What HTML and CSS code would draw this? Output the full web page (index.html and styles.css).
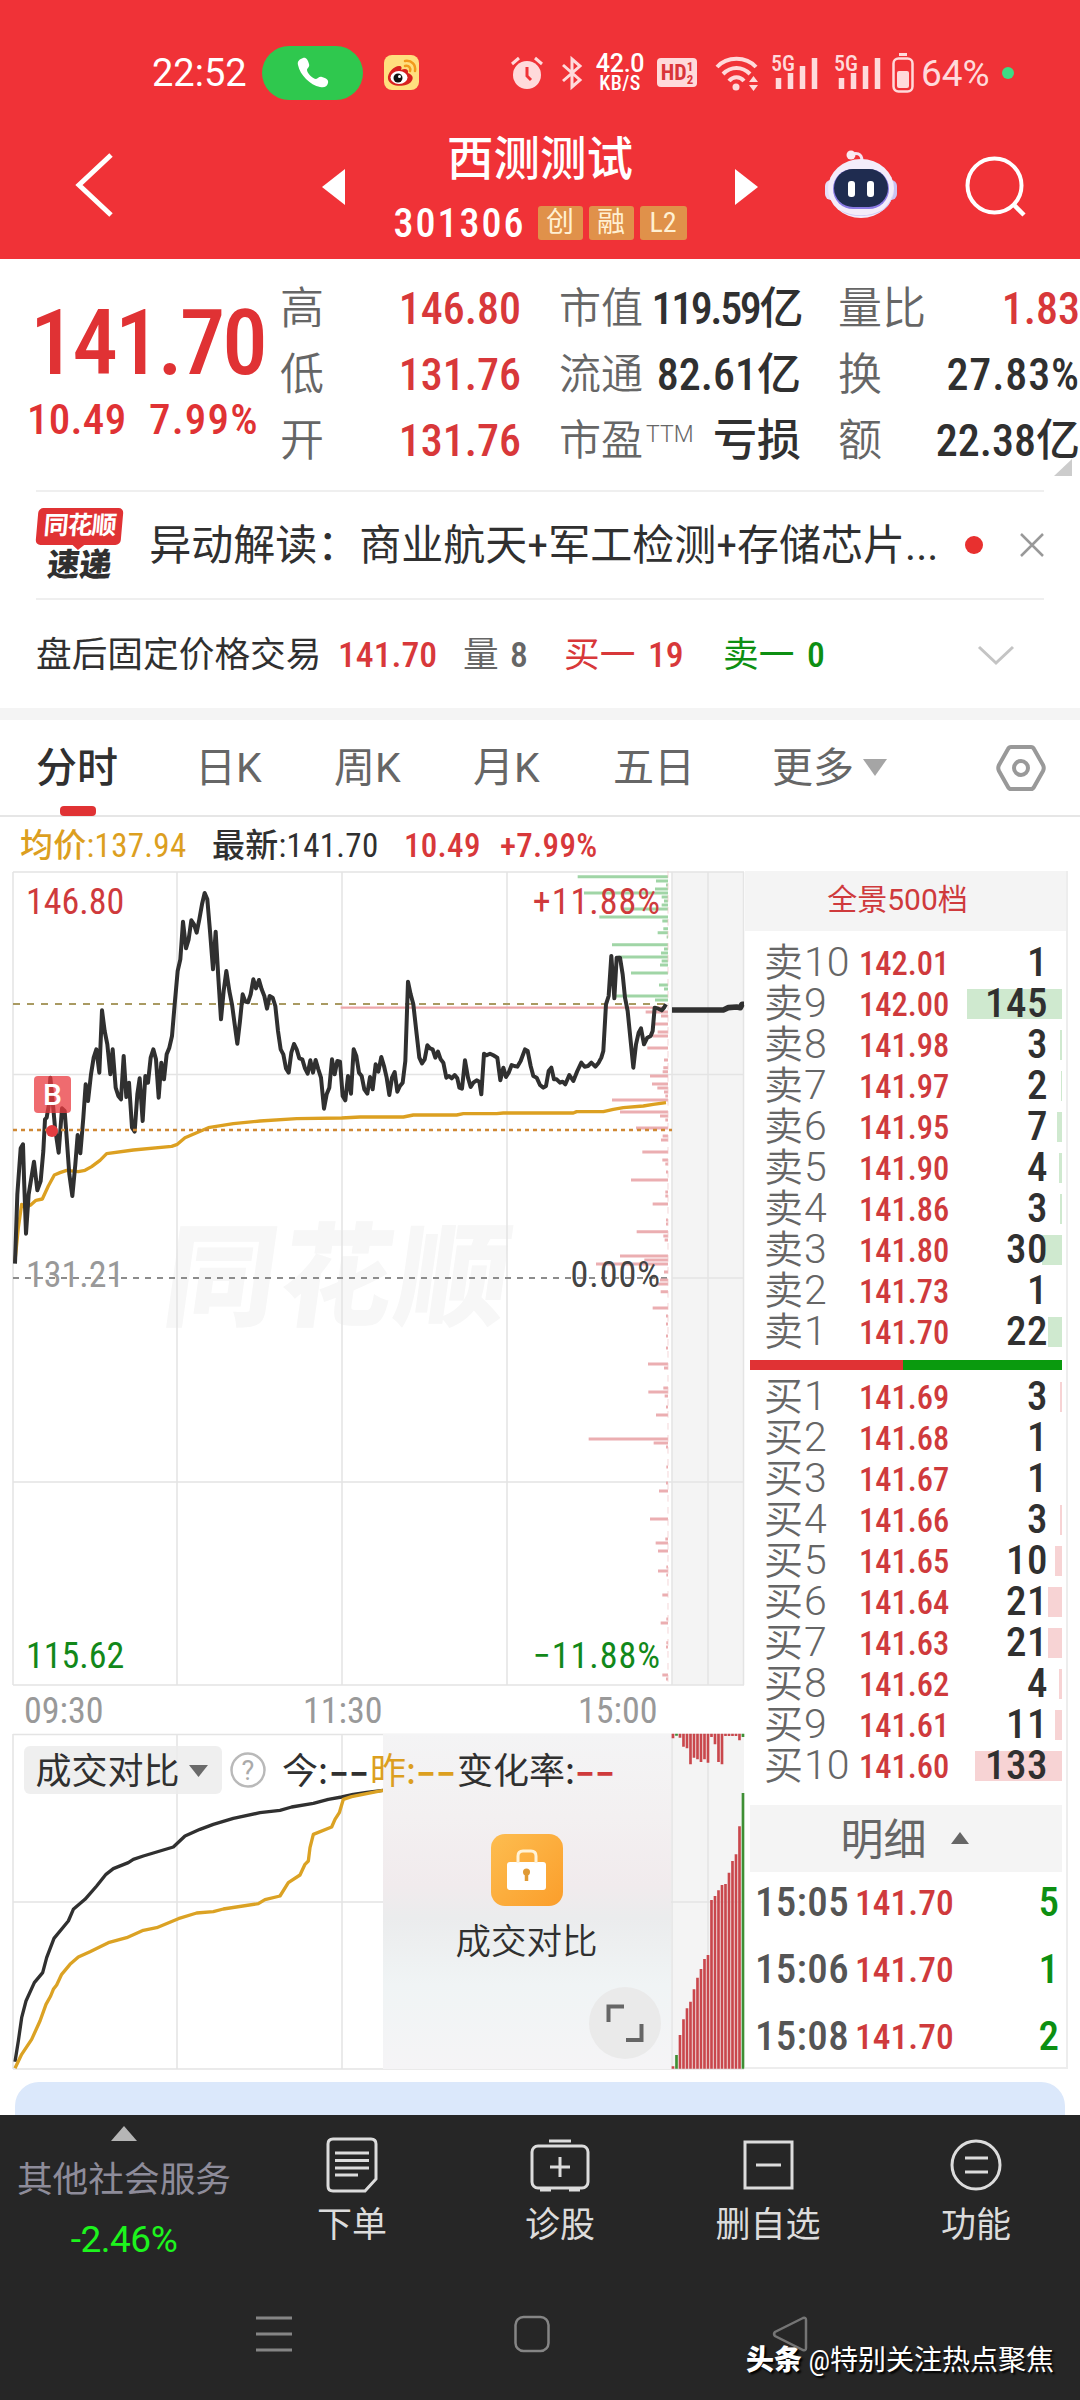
FILE: index.html
```html
<!DOCTYPE html>
<html lang="zh-CN">
<head>
  <meta charset="UTF-8">
  <meta name="viewport" content="width=device-width, initial-scale=1.0">
  <title>西测测试 301306</title>
  <link rel="stylesheet" href="styles.css">
</head>
<body>
  <header class="top">
    <div class="status">
      <span class="clock">22:52</span>
      <span class="call">
        <svg width="34" height="34" viewBox="0 0 34 34"><path d="M7 2c3-1 5 2 6 6 1 3-2 4-2 6 0 3 6 9 9 9 2 0 3-3 6-2 4 1 7 3 6 6-1 4-4 5-8 4C14 29 4 19 2 9c-1-4 2-6 5-7z" fill="#fff"/></svg>
      </span>
      <svg class="weibo" width="35" height="35" viewBox="0 0 35 35">
        <rect width="35" height="35" rx="8" fill="#ffdf7e"/>
        <path d="M4 24c-1-6 6-13 11-13 3 0 3 2 2 4 4-2 8-1 7 3 5 2 6 5 3 9-4 5-21 6-23-3z" fill="#d8201f"/>
        <ellipse cx="15" cy="22.500" rx="8.500" ry="6.500" fill="#fff"/>
        <circle cx="14" cy="23" r="4.500" fill="#111"/><circle cx="15.500" cy="21.500" r="1.500" fill="#fff"/>
        <path d="M21 11c4-1 6 2 5 5M21 6c7-1 11 4 10 10" fill="none" stroke="#f29a1c" stroke-width="2.500" stroke-linecap="round"/>
      </svg>
      <svg class="alarm" width="34" height="34" viewBox="0 0 34 34">
        <circle cx="17" cy="19" r="14" fill="#ffdadb"/>
        <path d="M2 8l7-6M32 8l-7-6" stroke="#ffdadb" stroke-width="3"/>
        <path d="M17 11v9l4 4" fill="none" stroke="#f03237" stroke-width="3"/>
      </svg>
      <svg class="bt" width="22" height="34" viewBox="0 0 22 34"><path d="M2 9l17 15-8 7V3l8 7L2 25" fill="none" stroke="#ffdadb" stroke-width="3"/></svg>
      <span class="speed">42.0<small>KB/S</small></span>
      <span class="hd">HD<small><i>1</i><i>2</i></small></span>
      <svg class="wifi" width="44" height="36" viewBox="0 0 44 36">
        <path d="M2 12C12 1 31 1 41 12M8 19c8-8 19-8 27 0M14 26c4-5 11-5 15 0" fill="none" stroke="#ffdadb" stroke-width="4"/>
        <circle cx="21" cy="32" r="3.500" fill="#ffdadb"/>
        <path d="M34 27h9l-4.500-6zM34 30h9l-4.500 6z" fill="#ffdadb"/>
      </svg>
      <svg class="signal" width="48" height="36" viewBox="0 0 48 36">
        <text x="0" y="16" class="g5">5G</text>
        <path d="M7.500 23v11M19.500 18v16M31.500 11v23M43.500 3v31" stroke="#ffdadb" stroke-width="5.500"/>
      </svg>
      <svg class="signal s2" width="48" height="36" viewBox="0 0 48 36">
        <text x="0" y="16" class="g5">5G</text>
        <path d="M7.500 23v11M19.500 18v16M31.500 11v23M43.500 3v31" stroke="#ffdadb" stroke-width="5.500"/>
      </svg>
      <svg class="battery" width="22" height="40" viewBox="0 0 22 40">
        <path d="M7 1.500h8" stroke="#ffdadb" stroke-width="3"/>
        <rect x="1.500" y="5.500" width="19" height="33" rx="5" fill="none" stroke="#ffdadb" stroke-width="2.500"/>
        <rect x="5" y="18" width="12" height="17" rx="2" fill="#ffdadb"/>
      </svg>
      <span class="pct">64%</span>
      <i class="mic"></i>
    </div>
    <div class="nav">
      <svg class="back" width="40" height="66" viewBox="0 0 40 66"><path d="M36 3L4 33l32 30" fill="none" stroke="#fff" stroke-width="5"/></svg>
      <svg class="prev" width="23" height="36" viewBox="0 0 23 36"><path d="M23 0v36L0 18z" fill="#fff"/></svg>
      <div class="stock">
        <h1>西测测试</h1>
        <div class="code">301306 <b>创</b><b>融</b><b class="l2">L2</b></div>
      </div>
      <svg class="next" width="23" height="36" viewBox="0 0 23 36"><path d="M0 0v36l23-18z" fill="#fff"/></svg>
      <svg class="robot" width="74" height="70" viewBox="0 0 74 70">
        <path d="M26 6c6-3 12-2 12 6" fill="none" stroke="#f6e4f2" stroke-width="3"/>
        <circle cx="27" cy="6" r="4.500" fill="#fbeaf2"/>
        <rect x="1" y="31" width="12" height="20" rx="6" fill="#e6def8"/><rect x="61" y="31" width="12" height="20" rx="6" fill="#c9c3f3"/>
        <ellipse cx="37" cy="39.500" rx="33" ry="29.500" fill="#f3ecfa"/>
        <path d="M16 61c12 7 30 7 42 0 7-5 11-13 11-20 0 18-14 26-32 26-9 0-16-2-21-6z" fill="#cfc9f4"/>
        <rect x="9" y="20" width="56" height="40" rx="20" fill="#8a7ae4"/>
        <rect x="10" y="20" width="54" height="38" rx="19" fill="#1f2c50"/>
        <rect x="24" y="32" width="7" height="16" rx="3" fill="#fff"/><rect x="43" y="32" width="7" height="16" rx="3" fill="#fff"/>
      </svg>
      <svg class="search" width="62" height="62" viewBox="0 0 62 62"><circle cx="29.500" cy="29.500" r="27" fill="none" stroke="#fff" stroke-width="4"/><path d="M48 48l11 11" stroke="#fff" stroke-width="4.500"/></svg>
    </div>
  </header>

  <section class="quote">
    <div class="last">
      <div class="price">141.70</div>
      <div class="diff"><span>10.49</span><span>7.99%</span></div>
    </div>
    <div class="grid">
      <span>高</span><b class="up">146.80</b><span class="k2">市值</span><b class="tight">119.59亿</b><span class="k3">量比</span><b class="up">1.83</b>
      <span>低</span><b class="up">131.76</b><span class="k2">流通</span><b>82.61亿</b><span class="k3">换</span><b class="wide">27.83%</b>
      <span>开</span><b class="up">131.76</b><span class="k2">市盈<sup>TTM</sup></span><b>亏损</b><span class="k3">额</span><b>22.38亿</b>
    </div>
    <i class="corner"></i>
  </section>

  <section class="news">
    <div class="logo"><em>同花顺</em><strong>速递</strong></div>
    <p>异动解读：商业航天+军工检测+存储芯片...</p>
    <i class="dot"></i>
    <svg width="24" height="24" viewBox="0 0 24 24"><path d="M1 1l22 22M23 1L1 23" stroke="#999" stroke-width="2.500"/></svg>
  </section>

  <section class="fixed">
    <span>盘后固定价格交易</span><b class="up">141.70</b><span class="grey vol">量</span><b class="grey">8</b><span class="up">买一</span><b class="up">19</b><span class="down">卖一</span><b class="down">0</b>
    <svg width="36" height="20" viewBox="0 0 36 20"><path d="M1 2l17 16L35 2" fill="none" stroke="#c4c4c4" stroke-width="3"/></svg>
  </section>

  <nav class="tabs">
    <a class="on">分时</a><a>日K</a><a>周K</a><a>月K</a><a>五日</a><a class="more">更多<i></i></a>
    <svg width="50" height="48" viewBox="0 0 50 48"><path d="M15 3h20q2 0 3 2l9 16q1.500 3 0 6l-9 16q-1 2-3 2H15q-2 0-3-2L3 27q-1.500-3 0-6l9-16q1-2 3-2z" fill="none" stroke="#999" stroke-width="4"/><circle cx="25" cy="24" r="7" fill="none" stroke="#999" stroke-width="4"/></svg>
  </nav>

  <div class="info">
    <span class="avg">均价:137.94</span><span>最新:141.70</span><span class="up">10.49</span><span class="up">+7.99%</span>
  </div>

  <main class="board">
    <svg class="chart" width="745" height="1202" viewBox="0 869 745 1202">
      <defs>
        <linearGradient id="gold" x1="0" y1="0" x2="1" y2="1"><stop offset="0" stop-color="#fdbd50"/><stop offset="1" stop-color="#fb9e2b"/></linearGradient>
        <linearGradient id="haze" x1="0" y1="0" x2="0" y2="1">
          <stop offset="0" stop-color="#f4f4f5"/><stop offset=".25" stop-color="#f3f0f1"/><stop offset=".45" stop-color="#f1ebed"/>
          <stop offset=".55" stop-color="#ebeced"/><stop offset=".75" stop-color="#f0f4f5"/><stop offset="1" stop-color="#f5f4f6"/>
        </linearGradient>
      </defs>
      <rect x="672" y="871" width="72" height="813" fill="#f4f4f4"/>
      <text class="mark" transform="translate(160 1316) skewX(-8)">同花顺</text>
      <path class="gl" d="M13 871H744M13 1073.500H744M13 1481H744M13 1684H744M13 871V1684M177 871V1684M342 871V1684M507 871V1684M672 871V1684M708 871V1684M743.500 871V1684M672 1277H744"/>
      <path d="M13 1277H668" stroke="#8c8c8c" stroke-width="2" stroke-dasharray="6 6"/>
      <path d="M13 1003H668" stroke="#a99a62" stroke-width="2" stroke-dasharray="7 7"/>
      <g transform="translate(0 860) scale(.33333)" fill="none" stroke-linejoin="round">
        <path id="asks" stroke="#a0d5a6" stroke-width="9"/>
        <path id="bids" stroke="#ebaeb1" stroke-width="9"/>
        <path d="M1022 440H1990" stroke="#eda6aa" stroke-width="7"/>
        <path d="M2004 30V2465" stroke="#f0c3c5" stroke-width="2" stroke-dasharray="20 16"/>
        <polyline stroke="#dca021" stroke-width="10" points="45,1200 55,1100 65,1030 75,1040 92,1032 108,1018 127,1014 145,975 163,942 180,935 200,928 235,932 255,928 275,917 300,898 320,878 400,867 515,856 532,850 555,830 590,815 625,800 700,788 780,780 890,773 1025,771 1080,768 1210,768 1240,762 1370,762 1390,758 1490,758 1510,756 1720,756 1730,752 1810,752 1840,745 1870,740 1930,735 1960,730 1998,725"/>
        <polyline stroke="#303030" stroke-width="12" points="45,1208 52,1000 62,862 69,850 72,950 78,1118 86,1000 102,902 112,988 122,960 130,870 135,775 140,770 146,735 151,650 158,720 165,800 176,875 186,742 194,750 200,830 208,940 217,1005 226,910 233,822 241,877 250,770 257,670 264,720 273,640 281,590 289,565 298,635 306,448 314,510 322,550 331,640 338,565 347,680 355,705 363,715 371,585 379,708 387,665 396,800 404,812 412,700 419,652 428,780 436,645 444,665 452,590 460,565 468,595 476,710 484,605 492,655 500,580 508,560 516,525 524,430 533,330 541,295 549,182 558,262 566,235 574,178 582,190 590,215 598,175 606,130 614,96 622,115 630,210 639,325 647,212 655,350 663,475 671,390 679,330 688,390 696,430 704,490 712,548 720,480 728,400 736,422 744,424 752,400 760,355 768,382 777,357 785,385 793,405 801,443 809,405 818,410 826,435 834,510 842,565 850,580 858,622 866,635 874,575 882,549 890,565 898,592 907,595 915,622 923,638 931,598 939,635 947,597 955,625 963,650 972,743 980,700 988,680 996,595 1004,640 1012,600 1020,602 1028,705 1036,718 1044,645 1053,698 1061,565 1069,585 1077,635 1085,645 1093,685 1102,698 1110,648 1118,685 1127,610 1135,632 1144,588 1152,615 1160,650 1168,702 1176,650 1184,633 1192,692 1200,675 1208,665 1216,600 1224,362 1232,400 1240,430 1250,520 1258,590 1266,607 1274,595 1282,553 1290,562 1298,565 1306,590 1314,572 1322,595 1330,605 1339,650 1347,645 1355,652 1364,642 1372,652 1378,680 1386,683 1395,598 1404,650 1412,678 1420,665 1430,658 1438,662 1444,700 1452,578 1460,583 1470,578 1480,583 1492,590 1501,658 1510,620 1518,648 1526,635 1535,612 1543,615 1552,617 1562,600 1575,565 1583,570 1592,615 1600,645 1610,650 1620,672 1630,680 1638,675 1646,630 1654,620 1662,655 1670,655 1680,665 1688,662 1696,670 1708,642 1720,660 1732,630 1744,605 1754,617 1764,615 1774,605 1786,617 1796,605 1804,590 1810,570 1818,430 1826,405 1834,285 1843,412 1850,290 1860,290 1868,340 1875,410 1883,450 1892,540 1900,620 1908,550 1916,515 1923,502 1932,550 1942,530 1952,525 1958,510 1964,440 1975,443 1985,448 1992,440 1998,430"/>
        <polyline stroke="#303030" stroke-width="17" points="2016,447 2170,447 2185,440 2210,438 2221,440 2226,430 2232,430"/>
      </g>
      <path d="M13 1129H672" stroke="#cf8834" stroke-width="2.500" stroke-dasharray="4 4"/>
      <circle cx="52" cy="1130" r="6" fill="#e43c40"/>
      <rect x="34" y="1075" width="37" height="37" rx="4" fill="#e93a3f" opacity=".75"/>
      <text x="52.500" y="1104" class="buy">B</text>
      <g class="lab">
        <text x="26" y="913" fill="#cf3a3c">146.80</text>
        <text x="661" y="913" class="rt" fill="#cf3a3c">+11.88%</text>
        <text x="26" y="1286" fill="#999">131.21</text>
        <text x="661" y="1286" class="rt" fill="#444">0.00%</text>
        <text x="26" y="1667" fill="#12881a">115.62</text>
        <text x="661" y="1667" class="rt" fill="#12881a">−11.88%</text>
        <g fill="#999"><text x="24" y="1722">09:30</text><text x="303" y="1722">11:30</text><text x="578" y="1722">15:00</text></g>
      </g>

      <rect x="672" y="1733" width="72" height="335" fill="#f4f4f4"/>
      <path class="gl" d="M13 1733.500H744M13 1901H744M13 2068H744M13 1733V2068M177 1733V2068M342 1733V2068M708 1733V2068M672 1733V2068"/>
      <g transform="translate(0 1680) scale(.33333)" fill="none" stroke-linejoin="round">
        <polyline stroke="#303030" stroke-width="10" points="45,1142 55,1080 65,1010 78,960 103,905 128,875 140,830 162,772 205,720 220,685 255,655 290,615 318,580 340,563 385,545 400,535 430,525 480,510 520,498 555,465 600,445 640,430 700,412 780,395 840,388 875,378 940,367 985,355 1025,348 1060,340 1100,334 1149,328"/>
        <polyline stroke="#dba224" stroke-width="10" points="45,1162 65,1120 95,1075 120,1020 138,970 152,945 160,925 170,912 185,880 210,850 235,828 270,812 325,785 380,770 430,748 470,740 535,713 590,696 640,692 670,684 775,668 795,656 840,645 865,605 900,582 915,550 925,540 930,500 940,460 995,438 1005,415 1018,395 1030,355 1055,347 1149,328"/>
        <path id="volUp" stroke="#c9474c" stroke-width="8"/>
        <path id="volDown" stroke="#3f8f35" stroke-width="8"/>
      </g>
      <rect x="383" y="1733" width="288" height="335" fill="url(#haze)"/>
      <rect x="24" y="1745" width="198" height="48" rx="6" fill="#ececec" opacity=".85"/>
      <path d="M189 1764h19l-9.500 12z" fill="#6a6a6a"/>
      <circle cx="248" cy="1769" r="16.500" fill="none" stroke="#b9b9b9" stroke-width="2.500"/>
      <text x="248" y="1779" class="q">?</text>
      <g class="cmp">
        <text x="35.500" y="1783">成交对比</text>
        <text x="282" y="1783">今:</text><text x="329" y="1783" class="dash" textLength="40" lengthAdjust="spacingAndGlyphs">--</text>
        <g fill="#dc9f1f"><text x="370" y="1783">昨:</text><text x="416" y="1783" class="dash" textLength="40" lengthAdjust="spacingAndGlyphs">--</text></g>
        <text x="457" y="1783">变化率:</text><text x="575" y="1783" class="dash" textLength="40" lengthAdjust="spacingAndGlyphs" fill="#cf3a3c">--</text>
        <text x="526.500" y="1953" text-anchor="middle" class="thin">成交对比</text>
      </g>
      <rect x="491" y="1833" width="72" height="72" rx="14" fill="url(#gold)"/>
      <rect x="507" y="1861" width="39" height="28" rx="3" fill="#fff"/>
      <path d="M518 1862v-7q0-5 5-5h8q5 0 5 5v7" fill="none" stroke="#fff3d8" stroke-width="3"/>
      <circle cx="526.500" cy="1871" r="3.500" fill="#e09a35"/><path d="M526.500 1871v9" stroke="#e09a35" stroke-width="3.500"/>
      <circle cx="625" cy="2022" r="36" fill="#eaeaea"/>
      <path d="M608.500 2021v-15.500H624M641.500 2023v16H626" fill="none" stroke="#666" stroke-width="4"/>
    </svg>

    <aside class="book">
      <div class="full">全景500档</div>
      <div id="sell" class="rows"></div>
      <div class="ratio"><i></i></div>
      <div id="buy" class="rows bid"></div>
      <div class="detail">明细<i></i></div>
      <div class="deal"><span>15:05</span><b>141.70</b><em>5</em></div>
      <div class="deal"><span>15:06</span><b>141.70</b><em>1</em></div>
      <div class="deal"><span>15:08</span><b>141.70</b><em>2</em></div>
    </aside>
  </main>

  <div class="card"></div>

  <footer class="bottom">
    <div class="menu">
      <div class="sector"><i></i><span>其他社会服务</span><b>-2.46%</b></div>
      <div class="item">
        <svg width="52" height="56" viewBox="0 0 52 56"><path d="M7 2h38q5 0 5 5v35L39 54H7q-5 0-5-5V7q0-5 5-5z" fill="none" stroke="#dcdcdc" stroke-width="3"/><path d="M9 16h34M9 23.500h34M9 31h34M9 38h23" stroke="#dcdcdc" stroke-width="3"/></svg>
        <span>下单</span>
      </div>
      <div class="item">
        <svg width="60" height="56" viewBox="0 0 60 56"><path d="M19 4h22" stroke="#dcdcdc" stroke-width="3"/><rect x="2" y="9" width="56" height="42" rx="6" fill="none" stroke="#dcdcdc" stroke-width="3"/><path d="M20 30h20M30 20v20M10 53h11M39 53h11" stroke="#dcdcdc" stroke-width="3"/></svg>
        <span>诊股</span>
      </div>
      <div class="item">
        <svg width="52" height="56" viewBox="0 0 52 56"><rect x="3" y="5" width="47" height="46" fill="none" stroke="#dcdcdc" stroke-width="3"/><path d="M14 28h25" stroke="#dcdcdc" stroke-width="3"/></svg>
        <span>删自选</span>
      </div>
      <div class="item">
        <svg width="52" height="56" viewBox="0 0 52 56"><circle cx="26" cy="28" r="24" fill="none" stroke="#dcdcdc" stroke-width="3"/><path d="M15 21h23M15 35h23" stroke="#dcdcdc" stroke-width="3"/></svg>
        <span>功能</span>
      </div>
    </div>
    <div class="sys">
      <svg width="36" height="38" viewBox="0 0 36 38"><path d="M0 3h36M0 19h36M0 35h36" stroke="#858585" stroke-width="3"/></svg>
      <svg width="36" height="38" viewBox="0 0 36 38"><rect x="1.500" y="2" width="33" height="34" rx="8" fill="none" stroke="#858585" stroke-width="2.500"/></svg>
      <svg width="36" height="38" viewBox="0 0 36 38"><path d="M31 3L3 17q-2 2 0 4l28 14q3 1 3-2V5q0-3-3-2z" fill="none" stroke="#757575" stroke-width="2.500"/></svg>
    </div>
    <div class="author"><b>头条</b> @特别关注热点聚焦</div>
  </footer>

  <script>
    const sell = [[10, '142.01', 1], [9, '142.00', 145], [8, '141.98', 3], [7, '141.97', 2], [6, '141.95', 7],
                  [5, '141.90', 4], [4, '141.86', 3], [3, '141.80', 30], [2, '141.73', 1], [1, '141.70', 22]];
    const buy = [[1, '141.69', 3], [2, '141.68', 1], [3, '141.67', 1], [4, '141.66', 3], [5, '141.65', 10],
                 [6, '141.64', 21], [7, '141.63', 21], [8, '141.62', 4], [9, '141.61', 11], [10, '141.60', 133]];

    function fill(id, name, list) {
      document.getElementById(id).innerHTML = list.map(([n, price, qty]) => {
        const w = qty < 2 ? 0 : Math.max(1, Math.round(qty * 0.655));
        return `<div class="row"><span>${name}<u>${n}</u></span><b>${price}</b><em>${qty}</em><i style="width: ${w}px"></i></div>`;
      }).join('');
    }
    fill('sell', '卖', sell);
    fill('buy', '买', buy);

    // [y, left edge], every bar ends on the right axis
    const asks = [[47, 653], [60, 888], [72, 918], [84, 885], [96, 672], [108, 905], [120, 912], [132, 905], [144, 785], [168, 718], [180, 907], [203, 910], [215, 893], [228, 920], [251, 756], [264, 912], [276, 903], [288, 775], [300, 905], [312, 900], [336, 813], [372, 897], [384, 912], [405, 765], [417, 885]];
    const bids = [[453, 857], [465, 903], [489, 882], [513, 893], [525, 878], [561, 862], [597, 912], [620, 910], [632, 908], [645, 870], [669, 876], [681, 892], [693, 912], [705, 916], [717, 756], [753, 780], [765, 900], [777, 916], [801, 828], [825, 908], [837, 903], [873, 847], [897, 907], [909, 916], [933, 918], [957, 813], [993, 916], [1005, 916], [1029, 878], [1077, 918], [1089, 918], [1112, 830], [1125, 910], [1137, 914], [1185, 780], [1197, 853], [1209, 708], [1233, 912], [1257, 900], [1269, 890], [1292, 902], [1341, 878], [1365, 918], [1389, 918], [1425, 918], [1461, 918], [1509, 864], [1521, 912], [1581, 910], [1593, 865], [1605, 914], [1638, 918], [1662, 888], [1734, 686], [1746, 881], [1758, 918], [1818, 919], [1866, 918], [1890, 897], [1974, 870], [2034, 916], [2046, 887], [2070, 894], [2118, 919], [2130, 894], [2142, 919], [2202, 907], [2274, 919], [2286, 902], [2345, 919], [2358, 918], [2442, 907], [2454, 918]];
    const bars = list => list.map(([y, x]) => `M${1080 + x} ${y}H2004`).join('');
    document.getElementById('asks').setAttribute('d', bars(asks));
    document.getElementById('bids').setAttribute('d', bars(bids));

    // auction volume: matched from the bottom, unmatched from the top
    const matched = [1156, 1122, 1062, 1015, 982, 962, 925, 890, 864, 834, 822, 657, 645, 628, 612, 609, 575, 540, 520, 436, 336];
    const unmatched = [172, 164, 170, 197, 202, 250, 230, 235, 243, 235, 245, 168, 190, 243, 250, 165, 165, 165, 165, 178, 168];
    let up = '', down = '';
    matched.forEach((y, i) => {
      const x = (2019 + i * 10.5).toFixed(1);
      const d = `M${x} 1163V${y}M${x} 158V${unmatched[i]}`;
      if (i === 1 || i === 20) down += d; else up += d;
    });
    document.getElementById('volUp').setAttribute('d', up);
    document.getElementById('volDown').setAttribute('d', down);
  </script>
</body>
</html>
```
FILE: styles.css
```css
* { box-sizing: border-box; }
body {
  margin: 0;
  width: 1080px;
  height: 2400px;
  overflow: hidden;
  background: #fff;
  color: #303030;
  font-family: "Roboto Condensed", "Noto Sans CJK SC", sans-serif;
  white-space: nowrap;
}
h1, p { margin: 0; font-weight: 400; }
b, em, i, u { font-weight: 500; font-style: normal; text-decoration: none; }
svg { display: block; flex: none; overflow: visible; }
.up { color: #d8383a; }
.down { color: #0d8f12; }
.grey { color: #666; }

/* header */
.top { height: 259px; background: #f03237; color: #fff; }
.status { display: flex; align-items: center; height: 145px; padding-left: 152px; font-family: Roboto, sans-serif; }
.clock { width: 110px; font-size: 38px; line-height: 38px; }
.call { display: flex; align-items: center; justify-content: center; width: 101px; height: 54px; border-radius: 27px; background: #2fc84e; }
.weibo { margin-left: 21px; }
.alarm { margin-left: 91px; }
.bt { margin-left: 17px; }
.speed { width: 50px; margin-left: 12px; font-size: 25px; line-height: 22px; font-weight: 500; text-align: center; letter-spacing: -0.3px; }
.speed small { display: block; font: 500 20px/17px "Roboto Condensed", sans-serif; letter-spacing: 0.5px; }
.hd {
  display: flex;
  align-items: center;
  justify-content: center;
  width: 40px;
  height: 29px;
  margin-left: 12px;
  border-radius: 4px;
  background: #ffdadb;
  color: #d9353a;
  font: 700 22px/29px "Roboto Condensed", sans-serif;
}
.hd small { font-size: 13px; line-height: 13px; }
.hd i { display: block; font-weight: 700; }
.wifi { margin-left: 18px; }
.signal { margin-left: 12px; }
.s2 { margin-left: 15px; }
.g5 { font: 500 22px "Roboto Condensed", sans-serif; fill: #ffdadb; }
.battery { margin-left: 10px; }
.pct { width: 81px; margin-left: 7px; font-size: 37px; line-height: 38px; font-weight: 400; padding-top: 3px; color: #ffdadb; }
.mic { width: 12px; height: 12px; border-radius: 50%; background: #3ddc84; }

.nav { display: flex; align-items: flex-start; height: 114px; padding: 7px 0 0 75px; }
.prev { margin: 17px 0 0 207px; }
.stock { width: 390px; margin-top: -18px; text-align: center; }
.stock h1 { font-size: 46.500px; line-height: 50px; font-weight: 500; }
.code { display: flex; justify-content: center; align-items: center; height: 34px; margin-top: 22px; font-size: 40px; font-weight: 500; letter-spacing: 2px; }
.code b { width: 45px; height: 34px; margin-left: 6px; border-radius: 3px; background: #e0914a; color: #fff0d2; font-size: 28px; line-height: 34px; font-weight: 400; letter-spacing: 0; }
.code b:first-child { margin-left: 12px; }
.code .l2 { width: 47px; }
.next { margin-top: 17px; }
.robot { margin: -3px 0 0 66px; }
.search { margin: 4px 0 0 67px; }

/* quote */
.quote { position: relative; display: flex; height: 231px; }
.last { width: 281px; padding-top: 44px; color: #e03234; }
.price { padding-left: 30px; font-size: 91px; line-height: 80px; font-weight: 500; letter-spacing: -3px; }
.diff { display: flex; margin-top: 14px; padding-left: 27px; font-size: 43px; line-height: 44px; font-weight: 500; letter-spacing: 1.2px; }
.diff span:first-child { width: 122px; letter-spacing: 0.3px; }
.grid { display: grid; grid-template-columns: 60px 181px 128px 152px 100px 179px; grid-auto-rows: 66px; width: 800px; padding-top: 17px; font-size: 44px; line-height: 66px; }
.grid span { color: #666; font-weight: 350; }
.grid b { text-align: right; }
.grid .tight { letter-spacing: -2.4px; }
.grid .wide { letter-spacing: 0.9px; }
.grid .k2 { padding-left: 38px; font-size: 42px; }
.grid .k3 { padding-left: 37px; }
.grid sup { display: inline-block; vertical-align: 13px; margin-left: 3px; font: 300 23px/20px Roboto, sans-serif; }
.corner { position: absolute; right: 8px; bottom: 14px; border-left: 18px solid transparent; border-bottom: 17px solid #ccc; }

.news { display: flex; align-items: center; height: 110px; margin: 0 36px; border-top: 2px solid #efefef; border-bottom: 2px solid #efefef; }
.logo { width: 87px; height: 74px; margin-left: 1px; text-align: center; }
.logo em { position: relative; display: block; height: 37px; border-radius: 5px; background: #e03234; color: #fff; font-size: 25px; line-height: 36px; font-weight: 700; transform: skewX(-5deg); letter-spacing: -1px; }
.logo em::after { content: ""; position: absolute; left: 36px; top: 36px; border: 7px solid transparent; border-top: 6px solid #e03234; }
.logo strong { display: block; margin-top: 2px; font-size: 32px; line-height: 36px; font-weight: 900; transform: skewX(-6deg); }
.news p { width: 813px; padding-left: 27px; font-size: 42px; line-height: 60px; padding-top: 2px; }
.news .dot { width: 18px; height: 18px; margin: 0 37px 0 30px; border-radius: 50%; background: #e8302f; }

.fixed { display: flex; align-items: center; height: 108px; padding: 2px 0 0 36px; font-size: 35.700px; line-height: 50px; }
.fixed span { width: 70px; }
.fixed span:first-child { width: 302px; }
.fixed b { width: 89px; padding-left: 14px; }
.fixed b:nth-child(2) { width: 125px; padding-left: 0; }
.fixed .vol { width: 43px; }
.fixed b:nth-child(4) { width: 34px; padding-left: 4px; margin-right: 24px; }
.fixed svg { margin-left: 96px; }

/* chart tabs */
.tabs { display: flex; align-items: center; height: 109px; border-top: 12px solid #f4f4f4; border-bottom: 2px solid #e6e6e6; padding-left: 36px; font-size: 41px; line-height: 60px; font-family: Roboto, "Noto Sans CJK SC", sans-serif; color: #666; }
.tabs a { position: relative; width: 139px; }
.tabs a:nth-child(1) { width: 159px; }
.tabs a:nth-child(4) { width: 140px; }
.tabs a:nth-child(5) { width: 159px; }
.tabs .on { color: #303030; font-weight: 500; }
.tabs .on::after { content: ""; position: absolute; left: 24px; top: 68px; width: 36px; height: 10px; border-radius: 4px; background: #e03234; }
.tabs .more { display: flex; align-items: center; width: 224px; }
.more i { margin-left: 9px; border: 12px solid transparent; border-top: 17px solid #a5a5a5; border-bottom: 0; }

.info { display: flex; height: 53px; padding-left: 20px; font-size: 33px; line-height: 57px; letter-spacing: 0.3px; }
.info span { width: 96px; font-weight: 500; }
.info span:nth-child(-n+2) { width: 192px; font-weight: 450; }
.info .avg { color: #dc9f1f; }

/* chart */
.board { display: flex; height: 1200px; }
.gl { fill: none; stroke: #e4e4e4; stroke-width: 1.500; }
.mark { font: 900 112px "Noto Sans CJK SC", sans-serif; letter-spacing: 4px; fill: #f7f7f7; }
.buy { font: 500 30px Roboto, sans-serif; fill: #fff; text-anchor: middle; }
.lab { font-size: 36px; font-weight: 450; }
.rt { text-anchor: end; letter-spacing: 1px; }
.q { font: 27px Roboto, sans-serif; fill: #aaa; text-anchor: middle; }
.cmp { font: 36px "Noto Sans CJK SC", sans-serif; fill: #303030; }
.dash { font-weight: 700; }
.thin { font-size: 35.500px; font-weight: 350; }

/* order book */
.book { width: 323px; height: 1198px; margin-top: 1px; border: 2px solid #ededed; border-top: 0; border-left: 0; padding-left: 5px; }
.full { height: 60px; margin-left: -5px; background: #f4f4f4; color: #cf3a3c; font: 30px/58px Roboto, "Noto Sans CJK SC", sans-serif; text-align: center; padding-right: 16px; }
.rows { padding-top: 11px; }
.row { position: relative; display: grid; grid-template-columns: 109px 100px 74px; height: 41px; padding-left: 15px; line-height: 41px; }
.row span { color: #666; font-size: 39px; font-family: Roboto, "Noto Sans CJK SC", sans-serif; font-weight: 350; margin-left: -1px; }
.row u { font-weight: 300; font-size: 41px; margin-left: 1px; }
.row b { margin: 2px 0 0 -15px; font-size: 32.500px; color: #cf3a3c; }
.row em { position: relative; z-index: 1; margin-left: -40px; font-size: 41px; text-align: right; letter-spacing: 0.5px; }
.row i { position: absolute; right: 4px; top: 6px; height: 30px; background: #cfe9cf; }
.bid i { background: #f7d3d4; }
.bid { padding-top: 0; }
.ratio { width: 312px; height: 10px; margin: 8px 0 6px; background: #0a9a0e; }
.ratio i { display: block; width: 49%; height: 10px; background: #e03234; }
.detail { display: flex; align-items: center; justify-content: center; width: 312px; height: 67px; margin: 19px 0 -4px; background: #f4f4f4; color: #666; font-size: 43px; line-height: 67px; padding-top: 4px; }
.detail i { margin: 0 3px 6px 24px; border: 9px solid transparent; border-bottom: 12px solid #666; border-top: 0; }
.deal { display: flex; align-items: center; height: 67px; padding-left: 5px; font-size: 41px; font-weight: 500; color: #555; }
.deal span { width: 100px; letter-spacing: 0.3px; }
.deal b { width: 122px; font-size: 35.500px; color: #cf3a3c; padding-top: 3px; }
.deal em { width: 82px; text-align: right; color: #0d8f12; }

/* bottom */
.card { height: 45px; margin: 12px 15px 0; border-radius: 24px 24px 0 0; background: #dbe8fb; }
.bottom { position: absolute; left: 0; top: 2115px; width: 1080px; height: 285px; background: #262626; color: #dcdcdc; }
.menu { display: flex; height: 190px; }
.sector { width: 248px; display: flex; flex-direction: column; align-items: center; padding-top: 11px; color: #8e8c9a; font-size: 35.700px; line-height: 50px; }
.sector i { border: 13px solid transparent; border-bottom: 15px solid #b5b5b5; border-top: 0; }
.sector span { margin-top: 14px; }
.sector b { margin-top: 10px; color: #1df41d; font: 37px/50px Roboto, sans-serif; letter-spacing: -0.5px; }
.item { display: flex; flex-direction: column; align-items: center; width: 208px; padding-top: 22px; font-size: 35px; line-height: 50px; }
.item span { margin-top: 8px; }
.sys { display: flex; gap: 222px; padding: 10px 0 0 256px; }
.author { position: absolute; right: 26px; bottom: 19px; color: #fff; font-size: 28px; line-height: 40px; text-shadow: 2px 2px 2px #000; }
.author b { font-weight: 900; }
```
